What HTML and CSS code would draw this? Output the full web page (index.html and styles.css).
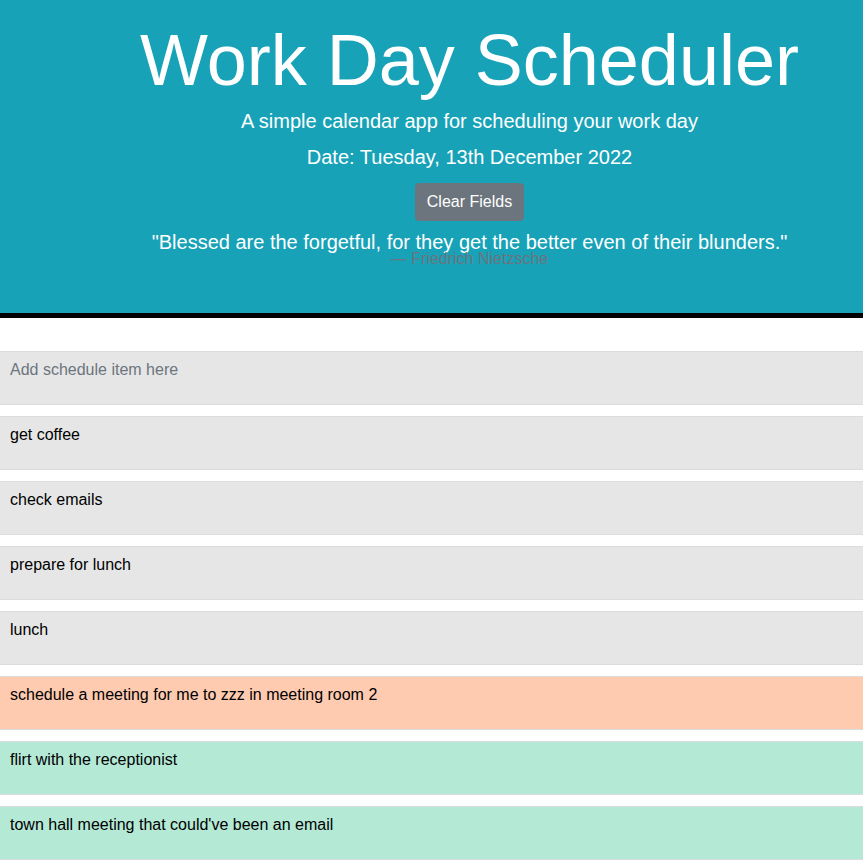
FILE: index.html
```html
<!DOCTYPE html>
<html lang="en">
<head>
<meta charset="utf-8">
<title>Work Day Scheduler</title>
<link rel="stylesheet" href="styles.css">
</head>
<body>
<header class="jumbotron">
  <div class="inner">
    <h1 class="title">Work Day Scheduler</h1>
    <p class="lead">A simple calendar app for scheduling your work day</p>
    <p class="lead date">Date: Tuesday, 13th December 2022</p>
    <button class="btn-clear" type="button">Clear Fields</button>
    <blockquote class="quote">
      <p class="quote-text">"Blessed are the forgetful, for they get the better even of their blunders."</p>
      <footer class="quote-author">— Friedrich Nietzsche</footer>
    </blockquote>
  </div>
</header>
<main class="schedule">
  <div class="row past"><textarea class="description" placeholder="Add schedule item here"></textarea></div>
  <div class="row past"><textarea class="description">get coffee</textarea></div>
  <div class="row past"><textarea class="description">check emails</textarea></div>
  <div class="row past"><textarea class="description">prepare for lunch</textarea></div>
  <div class="row past"><textarea class="description">lunch</textarea></div>
  <div class="row present"><textarea class="description">schedule a meeting for me to zzz in meeting room 2</textarea></div>
  <div class="row future"><textarea class="description">flirt with the receptionist</textarea></div>
  <div class="row future"><textarea class="description">town hall meeting that could've been an email</textarea></div>
</main>
</body>
</html>
```
FILE: styles.css
```css
html, body {
  margin: 0;
  padding: 0;
  background: #ffffff;
  font-family: "Liberation Sans", Arial, sans-serif;
  overflow: hidden;
}

.jumbotron {
  background: #17a2b8;
  border-bottom: 5px solid #000000;
  height: 313px;
  box-sizing: content-box;
}

.inner {
  padding-left: 76px;
  text-align: center;
  color: #ffffff;
}

.title {
  margin: 0;
  padding-top: 20px;
  font-size: 72px;
  font-weight: 300;
  line-height: 80px;
}

.lead {
  margin: 0;
  font-size: 20px;
  line-height: 36px;
}

.lead:first-of-type {
  margin-top: 3px;
}

.btn-clear {
  margin-top: 8px;
  background: #6c757d;
  color: #ffffff;
  border: 1px solid #6c757d;
  border-radius: 4px;
  font-family: "Liberation Sans", Arial, sans-serif;
  font-size: 16px;
  line-height: 24px;
  padding: 6px 11px;
}

.quote {
  margin: 9px 0 0;
}

.quote-text {
  margin: 0;
  font-size: 20px;
  line-height: 24px;
}

.quote-author {
  margin-top: -5px;
  font-size: 16px;
  line-height: 20px;
  color: #6c757d;
}

.schedule {
  padding-top: 33px;
  display: flex;
  flex-direction: column;
  gap: 11px;
}

.row {
  display: flex;
}

.description {
  flex: 1;
  margin: 0;
  height: 54px;
  box-sizing: border-box;
  border: none;
  border-top: 1px solid #dcdcdc;
  border-bottom: 1px solid #dcdcdc;
  padding: 8px 10px;
  font-family: "Liberation Sans", Arial, sans-serif;
  font-size: 16px;
  line-height: 20px;
  color: #000000;
  resize: none;
  overflow: hidden;
  background: transparent;
}

.description::placeholder {
  color: #6c757d;
}

.past .description { background: #e6e6e6; }
.present .description { background: #ffcbb0; }
.future .description { background: #b4e9d6; }
```
